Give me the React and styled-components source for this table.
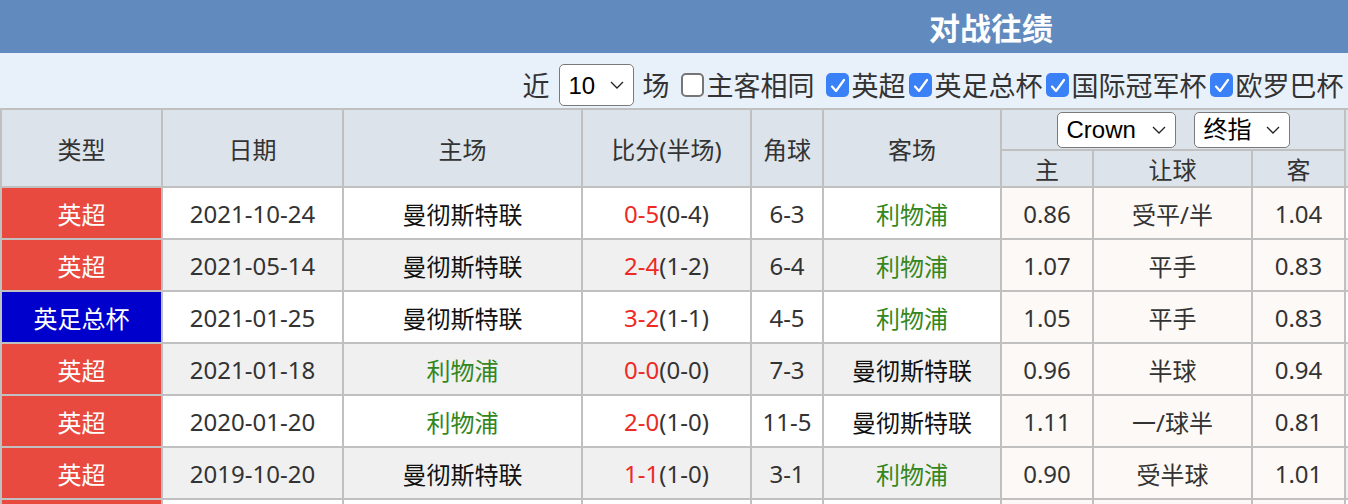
import React from "react";
import styled, { createGlobalStyle } from "styled-components";

const GlobalStyle = createGlobalStyle`
  html, body { margin: 0; padding: 0; background: #fff; overflow: hidden; }
  * { box-sizing: border-box; }
`;

const CJK = `"Noto Sans", "Noto Sans CJK SC", sans-serif`;

const Page = styled.div`
  width: 1982px;
  font-family: ${CJK};
`;

const TitleBar = styled.div`
  height: 53px;
  background: #618bbf;
  color: #fff;
  font-size: 31px;
  font-weight: 700;
  display: flex;
  align-items: center;
  justify-content: center;
  font-family: "Noto Sans CJK SC", sans-serif;
`;

const Toolbar = styled.div`
  height: 55px;
  background: #e8f0f9;
  padding: 11px 0 2px;
  display: flex;
  align-items: center;
  justify-content: center;
  color: #333;
  font-size: 27px;
  font-family: "Noto Sans CJK SC", sans-serif;
`;

const Word = styled.span`
  line-height: 42px;
  margin: ${(p) => p.$m || "0"};
  white-space: nowrap;
`;

const SelectWrap = styled.span`
  position: relative;
  display: inline-flex;
  width: ${(p) => p.$w}px;
  height: ${(p) => p.$h}px;
`;

const NativeSelect = styled.select`
  appearance: none;
  -webkit-appearance: none;
  width: 100%;
  height: 100%;
  border: 1.5px solid #7a7a7a;
  border-radius: 5px;
  background: #fff;
  color: #000;
  font-family: "Liberation Sans", "Noto Sans CJK SC", sans-serif;
  font-size: ${(p) => p.$fs || 24}px;
  padding: 0 0 0 ${(p) => p.$pl || 8}px;
  margin: 0;
  outline: none;
`;

const Chevron = styled.svg`
  position: absolute;
  right: 10px;
  top: 50%;
  margin-top: -4px;
  width: 14px;
  height: 8px;
  pointer-events: none;
`;

function Select({ w, h, fs, pl, options }) {
  return (
    <SelectWrap $w={w} $h={h}>
      <NativeSelect $fs={fs} $pl={pl} defaultValue={options[0]}>
        {options.map((o) => (
          <option key={o}>{o}</option>
        ))}
      </NativeSelect>
      <Chevron viewBox="0 0 14 8">
        <path d="M1 1l6 6 6-6" fill="none" stroke="#222" strokeWidth="1.3" />
      </Chevron>
    </SelectWrap>
  );
}

const CheckLabel = styled.label`
  display: inline-flex;
  align-items: center;
  line-height: 42px;
  margin-right: ${(p) => p.$mr || 2}px;
  white-space: nowrap;
`;

const Box = styled.span`
  width: 23px;
  height: 24px;
  border-radius: 5px;
  margin: 0 3px 0 1px;
  display: inline-flex;
  align-items: center;
  justify-content: center;
  background: ${(p) => (p.$on ? "#3a80f6" : "#fff")};
  border: ${(p) => (p.$on ? "none" : "2px solid #767676")};
`;

function Check({ on, children, mr }) {
  return (
    <CheckLabel $mr={mr}>
      <Box $on={on}>
        {on && (
          <svg width="17" height="17" viewBox="0 0 17 17">
            <path d="M3 9.5l4 4.5 8-11" fill="none" stroke="#fff" strokeWidth="2.2" strokeLinecap="round" strokeLinejoin="round" />
          </svg>
        )}
      </Box>
      {children}
    </CheckLabel>
  );
}

const Grid = styled.div`
  display: grid;
  grid-template-columns: 159px 179px 237px 167px 70px 176px 90px 157px 91px 1fr;
  grid-template-rows: 39px 35px;
  grid-auto-rows: 50px;
  gap: 2px;
  padding: 2px;
  background: #c0c0c0;
  font-size: 24px;
  color: #333;
`;

const Head = styled.div`
  background: #dce3ea;
  display: flex;
  align-items: center;
  justify-content: center;
  gap: 18px;
  grid-row: ${(p) => p.$row || "auto"};
  grid-column: ${(p) => p.$col || "auto"};
  white-space: nowrap;
`;

const bgFor = (p) => {
  if (p.$kind === "type") return p.$type === "英足总杯" ? "#0000cc" : "#e84a40";
  if (p.$kind === "odds") return "#fdf9f6";
  return p.$alt ? "#f0f0f0" : "#fff";
};

const Cell = styled.div`
  background: ${bgFor};
  color: ${(p) => (p.$kind === "type" ? "#fff" : p.$color || "#333")};
  display: flex;
  align-items: center;
  justify-content: center;
  white-space: nowrap;
`;

const Red = styled.span`
  color: #ee2a24;
`;

const teamColor = (t) => (t === "利物浦" ? "#34871d" : "#111");

const rows = [
  ["英超", "2021-10-24", "曼彻斯特联", "0-5", "(0-4)", "6-3", "利物浦", "0.86", "受平/半", "1.04"],
  ["英超", "2021-05-14", "曼彻斯特联", "2-4", "(1-2)", "6-4", "利物浦", "1.07", "平手", "0.83"],
  ["英足总杯", "2021-01-25", "曼彻斯特联", "3-2", "(1-1)", "4-5", "利物浦", "1.05", "平手", "0.83"],
  ["英超", "2021-01-18", "利物浦", "0-0", "(0-0)", "7-3", "曼彻斯特联", "0.96", "半球", "0.94"],
  ["英超", "2020-01-20", "利物浦", "2-0", "(1-0)", "11-5", "曼彻斯特联", "1.11", "一/球半", "0.81"],
  ["英超", "2019-10-20", "曼彻斯特联", "1-1", "(1-0)", "3-1", "利物浦", "0.90", "受半球", "1.01"],
  ["英超", "2019-02-24", "曼彻斯特联", "0-0", "(0-0)", "2-5", "利物浦", "0.95", "受平/半", "0.95"],
];

export default function App() {
  return (
    <Page>
      <GlobalStyle />
      <TitleBar>对战往绩</TitleBar>
      <Toolbar>
        <Word $m="0 9px 0 0">近</Word>
        <Select w={75} h={42} fs={24} pl={9} options={["10", "20", "30"]} />
        <Word $m="0 10px 0 9px">场</Word>
        <Check on={false} mr={10}>主客相同</Check>
        <Check on>英超</Check>
        <Check on>英足总杯</Check>
        <Check on>国际冠军杯</Check>
        <Check on mr={6}>欧罗巴杯</Check>
        <Check on>英联杯</Check>
      </Toolbar>
      <Grid>
        <Head $row="span 2">类型</Head>
        <Head $row="span 2">日期</Head>
        <Head $row="span 2">主场</Head>
        <Head $row="span 2">比分(半场)</Head>
        <Head $row="span 2">角球</Head>
        <Head $row="span 2">客场</Head>
        <Head $col="span 3">
          <Select w={119} h={36} fs={24} pl={9} options={["Crown", "Bet365"]} />
          <Select w={96} h={36} fs={24} pl={9} options={["终指", "初指"]} />
        </Head>
        <Head $row="span 2" />
        <Head>主</Head>
        <Head>让球</Head>
        <Head>客</Head>
        {rows.map((r, i) => {
          const alt = i % 2 === 1;
          return (
            <React.Fragment key={i}>
              <Cell $kind="type" $type={r[0]}>{r[0]}</Cell>
              <Cell $alt={alt}>{r[1]}</Cell>
              <Cell $alt={alt} $color={teamColor(r[2])}>{r[2]}</Cell>
              <Cell $alt={alt}>
                <Red>{r[3]}</Red>
                {r[4]}
              </Cell>
              <Cell $alt={alt}>{r[5]}</Cell>
              <Cell $alt={alt} $color={teamColor(r[6])}>{r[6]}</Cell>
              <Cell $kind="odds">{r[7]}</Cell>
              <Cell $kind="odds">{r[8]}</Cell>
              <Cell $kind="odds">{r[9]}</Cell>
              <Cell $alt={alt} />
            </React.Fragment>
          );
        })}
      </Grid>
    </Page>
  );
}
